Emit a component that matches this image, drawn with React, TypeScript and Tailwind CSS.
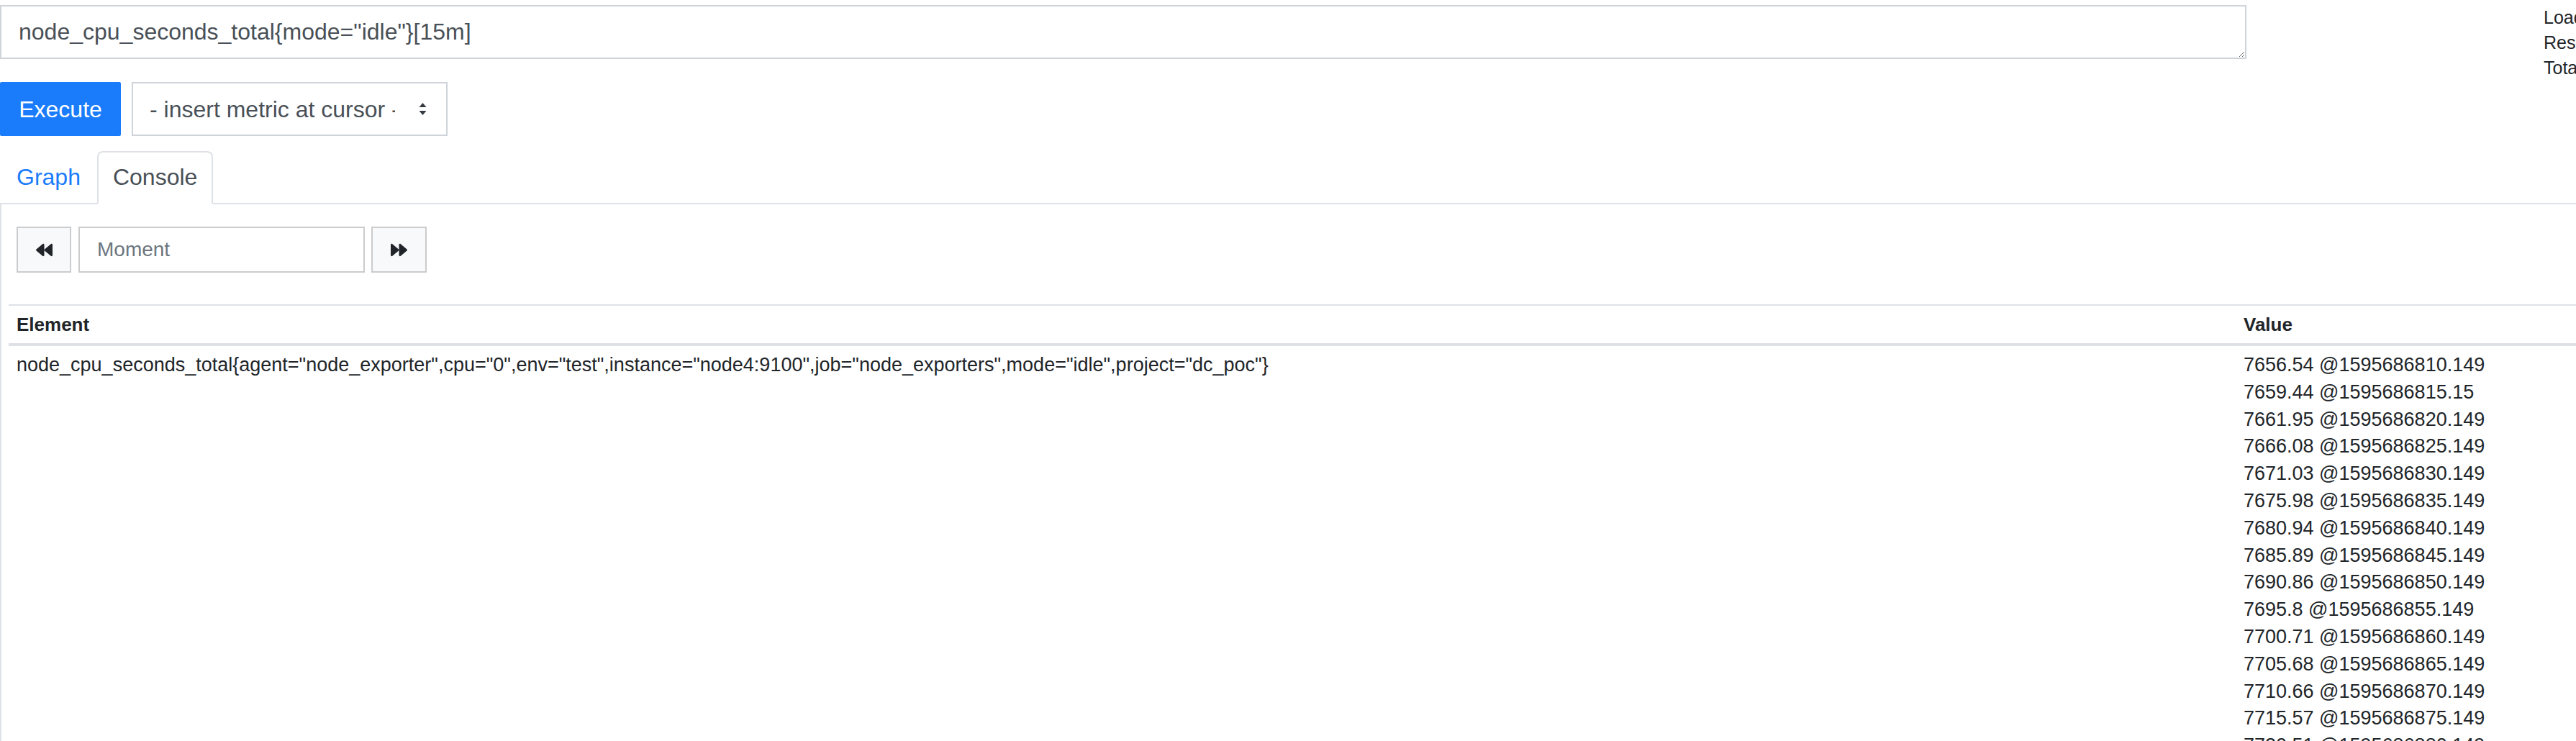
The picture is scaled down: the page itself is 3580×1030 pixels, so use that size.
import { FaBackward, FaForward } from 'react-icons/fa';

const values = [
  '7656.54 @1595686810.149',
  '7659.44 @1595686815.15',
  '7661.95 @1595686820.149',
  '7666.08 @1595686825.149',
  '7671.03 @1595686830.149',
  '7675.98 @1595686835.149',
  '7680.94 @1595686840.149',
  '7685.89 @1595686845.149',
  '7690.86 @1595686850.149',
  '7695.8 @1595686855.149',
  '7700.71 @1595686860.149',
  '7705.68 @1595686865.149',
  '7710.66 @1595686870.149',
  '7715.57 @1595686875.149',
  '7720.51 @1595686880.149',
  '7725.46 @1595686885.149',
];

function SelectArrows() {
  return (
    <svg width="11" height="17" viewBox="0 0 11 17" className="shrink-0">
      <path d="M5.5 0 L10.5 6 L0.5 6 Z" fill="#343a40" />
      <path d="M5.5 17 L10.5 11 L0.5 11 Z" fill="#343a40" />
    </svg>
  );
}

export default function App() {
  return (
    <div className="w-[3580px] h-[1030px] overflow-hidden bg-white text-[#212529] font-['Liberation_Sans',Arial,sans-serif]">
      <div className="flex items-start">
        <div className="w-[3122px] shrink-0 pt-[7px]">
          <textarea
            readOnly
            value={'node_cpu_seconds_total{mode="idle"}[15m]'}
            className="block w-full h-[75px] border-2 border-[#ced4da] px-[24px] py-[12px] text-[32px] leading-[46px] text-[#495057] resize-y overflow-hidden outline-none"
          />
          <div className="flex items-center gap-[15px] mt-[32px]">
            <button className="w-[168px] h-[75px] bg-[#1a7cfa] text-white text-[32px] rounded-[2px]">
              Execute
            </button>
            <div className="w-[439px] h-[75px] border-2 border-[#ced4da] bg-white flex items-center pl-[23px] pr-[27px] text-[32px] text-[#495057]">
              <span className="w-[341px] overflow-hidden whitespace-nowrap">- insert metric at cursor -</span>
              <span className="flex-1" />
              <SelectArrows />
            </div>
          </div>
        </div>
        <div className="ml-[413px] pt-[7px] text-[25px] leading-[35px] whitespace-nowrap shrink-0">
          <div>Load time: 31ms</div>
          <div>Resolution: 3s</div>
          <div>Total time series: 1</div>
        </div>
      </div>

      <div className="flex items-end mt-[21px] border-b-2 border-[#dee2e6] w-[3580px]">
        <div className="px-[23px] pt-[10px] pb-[14px] leading-[48px] text-[32px] text-[#1a7cfa] -mb-[2px]">
          Graph
        </div>
        <div className="px-[20px] pt-[10px] pb-[12px] leading-[48px] text-[32px] text-[#495057] border-2 border-[#dee2e6] border-b-white bg-white rounded-t-[8px] -mb-[2px]">
          Console
        </div>
      </div>

      <div className="border-l-2 border-[#dee2e6] pl-[10px] h-[800px]">
        <div className="flex items-center ml-[11px] pt-[31px]">
          <button className="w-[76px] h-[64px] bg-[#f8f9fa] border-2 border-[#cccccc] flex items-center justify-center text-[#212529]">
            <FaBackward size={23} />
          </button>
          <div className="w-[398px] h-[64px] ml-[10px] border-2 border-[#cccccc] flex items-center pl-[24px] text-[28px] text-[#6c757d]">
            Moment
          </div>
          <button className="w-[77px] h-[64px] ml-[9px] bg-[#f8f9fa] border-2 border-[#cccccc] flex items-center justify-center text-[#212529]">
            <FaForward size={23} />
          </button>
        </div>

        <div className="mt-[44px] w-[3700px] border-t-2 border-[#dee2e6]">
          <div className="flex border-b-4 border-[#dee2e6] text-[26px] font-bold leading-[38px]">
            <div className="w-[3095px] shrink-0 px-[11px] py-[7px]">Element</div>
            <div className="px-[11px] py-[7px]">Value</div>
          </div>
          <div className="flex text-[27px] leading-[37.8px]">
            <div className="w-[3095px] shrink-0 px-[11px] pt-[8px] whitespace-nowrap">
              {'node_cpu_seconds_total{agent="node_exporter",cpu="0",env="test",instance="node4:9100",job="node_exporters",mode="idle",project="dc_poc"}'}
            </div>
            <div className="px-[11px] pt-[8px]">
              {values.map((v) => (
                <div key={v} className="whitespace-nowrap">{v}</div>
              ))}
            </div>
          </div>
        </div>
      </div>
    </div>
  );
}
